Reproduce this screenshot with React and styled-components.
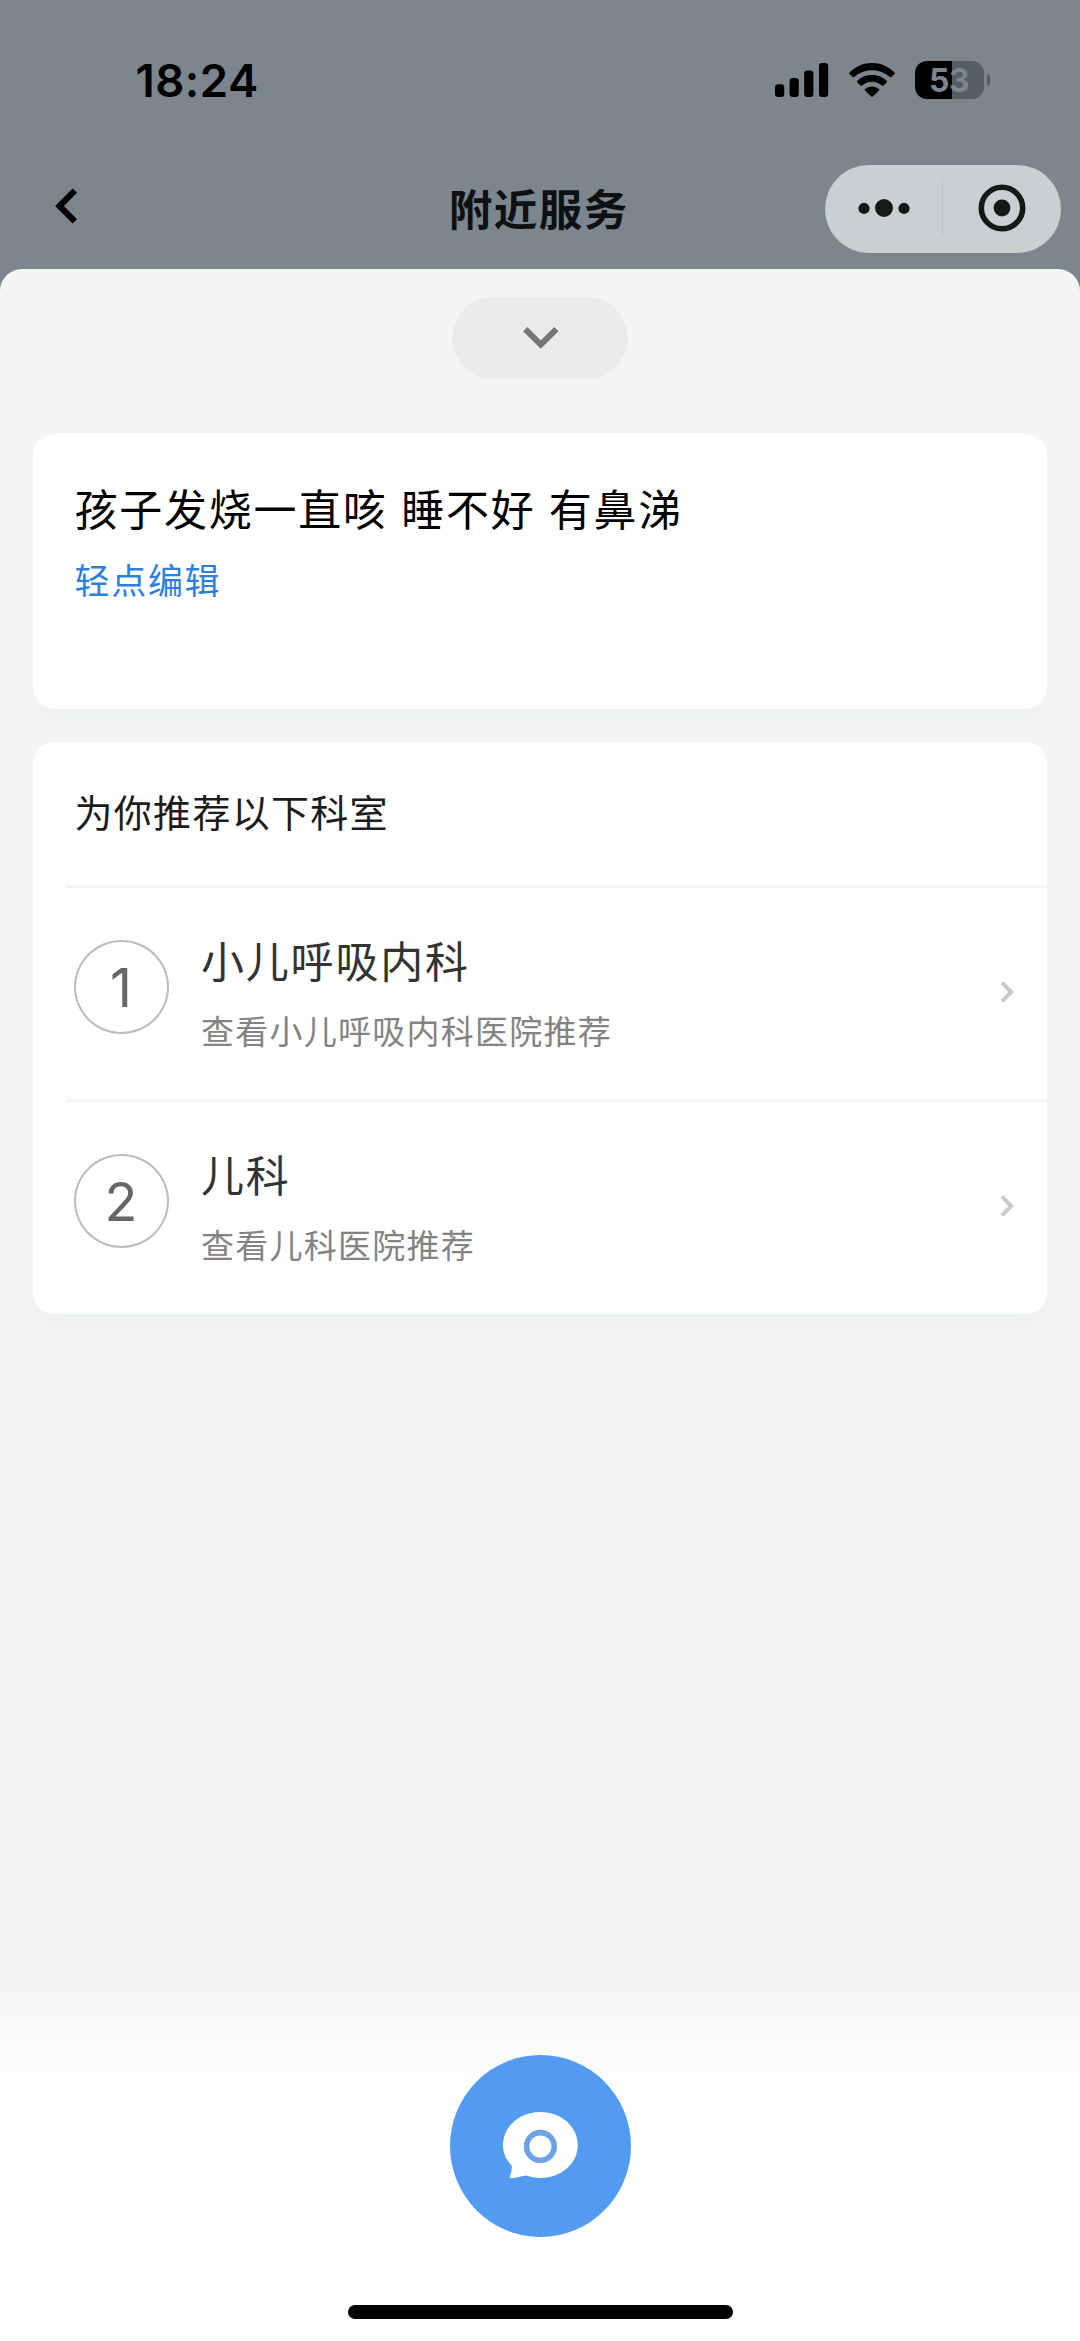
import React from "react";
import styled, { createGlobalStyle } from "styled-components";

const GlobalStyle = createGlobalStyle`
  * { box-sizing: border-box; }
  body {
    margin: 0;
    background: #7c868e;
    font-family: "Noto Sans CJK SC", "Noto Sans", sans-serif;
  }
`;

const Screen = styled.div`
  width: 1080px;
  height: 2341px;
  display: flex;
  flex-direction: column;
  overflow: hidden;
  background: #7c868e;
`;

const StatusBar = styled.header`
  height: 137px;
  padding: 22px 90px 0 135.5px;
  display: flex;
  align-items: flex-start;
  justify-content: space-between;
`;

const Clock = styled.time`
  padding-top: 1px;
  font: 600 45.5px/116px Inter, sans-serif;
  letter-spacing: 0.5px;
  color: #000;
`;

const StatusIcons = styled.div`
  display: flex;
  align-items: center;
  gap: 20px;
  height: 116px;
`;

const Battery = styled.div`
  display: flex;
  align-items: center;
  gap: 3px;
`;

const BatteryBody = styled.div`
  width: 69px;
  height: 38px;
  padding-right: 1px;
  border-radius: 12px;
  display: flex;
  align-items: center;
  justify-content: center;
  background: linear-gradient(90deg, #000 37px, #565d63 37px);
  font: 700 32px/39px Inter, sans-serif;
  letter-spacing: -0.5px;
  color: #7c868e;
`;

const BatteryTip = styled.div`
  width: 3px;
  height: 12px;
  border-radius: 0 3px 3px 0;
  background: #565d63;
`;

const NavBar = styled.nav`
  height: 132px;
  padding: 28px 19.5px 0 55px;
  display: grid;
  grid-template-columns: 236px 1fr 236px;
  align-items: start;
  justify-items: center;
  column-gap: 18px;
`;

const BackButton = styled.button`
  justify-self: start;
  display: flex;
  padding: 23px 0 0;
  border: 0;
  background: none;
`;

const PageTitle = styled.h1`
  margin: 0;
  padding-right: 38px;
  font-size: 43.5px;
  line-height: 85px;
  font-weight: 700;
  letter-spacing: 1.5px;
  white-space: nowrap;
  color: #0e1012;
`;

const Capsule = styled.div`
  width: 236px;
  height: 87.5px;
  border-radius: 44px;
  display: flex;
  align-items: center;
  background: #cacfd2;
`;

const CapsuleHalf = styled.div`
  flex: 1;
  display: flex;
  justify-content: center;
  padding: 0 0 1px 1px;
`;

const CapsuleRule = styled.div`
  width: 1.5px;
  height: 55px;
  background: #bbc0c3;
`;

const Sheet = styled.main`
  flex: 1;
  padding: 28px 33px 22px;
  border-radius: 22px 22px 0 0;
  display: flex;
  flex-direction: column;
  align-items: center;
  background: linear-gradient(180deg, #f4f6f6 0, #f4f6f6 1718px, #ffffff 1832px);
`;

const CollapseButton = styled.button`
  width: 176px;
  height: 82px;
  padding: 0;
  border: 0;
  border-radius: 41px;
  display: flex;
  align-items: center;
  justify-content: center;
  background: #eaeceb;
`;

const Card = styled.section`
  width: 1014px;
  height: ${(p) => p.$height}px;
  margin-top: ${(p) => p.$gap}px;
  border-radius: 22px;
  background: #fff;
  box-shadow: 0 14px 28px -6px rgba(40, 60, 60, 0.03);
`;

const Query = styled.p`
  margin: 0;
  padding: 41px 42px 0 41.5px;
  font-size: 43px;
  line-height: 64px;
  letter-spacing: 1.75px;
  word-spacing: 2px;
  color: #000;
`;

const EditLink = styled.a`
  display: block;
  padding: 14px 42px 0 41.5px;
  font-size: 35px;
  line-height: 52px;
  letter-spacing: 1.7px;
  color: #2c7fdd;
`;

const CardHeading = styled.h2`
  height: 143px;
  margin: 0;
  padding: 0 42px 0 41.5px;
  font-size: 38px;
  line-height: 137px;
  font-weight: 400;
  letter-spacing: 1.3px;
  color: #1c1c1c;
`;

const Department = styled.div`
  height: 214px;
  margin-left: 33px;
  padding: 0 32px 0 8px;
  border-top: 3px solid #f5f5f5;
  display: flex;
  align-items: flex-start;
`;

const Rank = styled.div`
  width: 95px;
  height: 94px;
  margin: 52px 32px 0 0;
  padding-right: 1px;
  border: 2px solid #bbbbc1;
  border-radius: 50%;
  text-align: center;
  font: 400 54px/92px Inter, sans-serif;
  color: #666;
`;

const DepartmentText = styled.div`
  flex: 1;
  padding-top: 39px;
`;

const Name = styled.div`
  font-size: 43px;
  line-height: 64px;
  letter-spacing: 1.8px;
  color: #333;
`;

const Hint = styled.div`
  padding-top: 15px;
  font-size: 33px;
  line-height: 48px;
  letter-spacing: 1.25px;
  color: #838383;
`;

const Arrow = styled.svg`
  margin-top: 93px;
`;

const Footer = styled.footer`
  margin-top: auto;
  display: flex;
  flex-direction: column;
  align-items: center;
  gap: 68px;
`;

const ChatButton = styled.button`
  width: 181px;
  height: 182px;
  padding: 0 0 2px;
  border: 0;
  border-radius: 50%;
  display: flex;
  align-items: center;
  justify-content: center;
  background: #529bf0;
`;

const HomeIndicator = styled.div`
  width: 385px;
  height: 14px;
  border-radius: 7px;
  background: #000;
`;

const departments = [
  { name: "小儿呼吸内科", hint: "查看小儿呼吸内科医院推荐" },
  { name: "儿科", hint: "查看儿科医院推荐" },
];

function SignalIcon() {
  return (
    <svg width="54" height="34" viewBox="0 0 54 34">
      <rect x="0" y="21.3" width="9.2" height="12.7" rx="3" />
      <rect x="14.6" y="15" width="9.2" height="19" rx="3" />
      <rect x="29.2" y="7.5" width="9.2" height="26.5" rx="3" />
      <rect x="44" y="0" width="9.2" height="34" rx="3" />
    </svg>
  );
}

function WifiIcon() {
  return (
    <svg width="46" height="34" viewBox="0 0 46 34">
      <path d="M0.6 9.4 C13 -3.1 33 -3.1 45.4 9.4 Q46.2 10.2 45.4 11 L42.4 14 Q41.6 14.7 40.8 14 C31 4.9 15 4.9 5.2 14 Q4.4 14.7 3.6 14 L0.6 11 Q-.2 10.2 .6 9.4 Z" />
      <path d="M8.3 17.8 C16.4 9.8 29.6 9.8 37.7 17.8 Q38.4 18.6 37.7 19.4 L34.4 22.4 Q33.6 23.2 32.8 22.5 C27.2 17.4 18.8 17.4 13.2 22.5 Q12.4 23.2 11.6 22.4 L8.3 19.4 Q7.6 18.6 8.3 17.8 Z" />
      <path d="M16 26 C20 22.6 26 22.6 30 26 Q30.9 26.7 30 27.6 L23.8 33.5 Q23 34.2 22.2 33.5 L16 27.6 Q15.1 26.7 16 26 Z" />
    </svg>
  );
}

export default function App() {
  return (
    <>
      <GlobalStyle />
      <Screen>
        <StatusBar>
          <Clock>18:24</Clock>
          <StatusIcons>
            <SignalIcon />
            <WifiIcon />
            <Battery>
              <BatteryBody>53</BatteryBody>
              <BatteryTip />
            </Battery>
          </StatusIcons>
        </StatusBar>
        <NavBar>
          <BackButton aria-label="返回">
            <svg width="22" height="36" viewBox="0 0 22 36" fill="none">
              <path d="M19.8 2.6 L4.5 18 L19.8 33.4" stroke="#000" strokeWidth="6.2" />
            </svg>
          </BackButton>
          <PageTitle>附近服务</PageTitle>
          <Capsule>
            <CapsuleHalf>
              <svg width="52" height="18" viewBox="0 0 52 18" fill="#161817">
                <circle cx="6" cy="9.4" r="5.6" />
                <circle cx="26" cy="9" r="9" />
                <circle cx="46" cy="9.4" r="5.6" />
              </svg>
            </CapsuleHalf>
            <CapsuleRule />
            <CapsuleHalf>
              <svg width="48" height="48" viewBox="0 0 48 48">
                <circle cx="24" cy="24" r="20.7" fill="none" stroke="#161817" strokeWidth="5.6" />
                <circle cx="24" cy="24" r="8.4" fill="#161817" />
              </svg>
            </CapsuleHalf>
          </Capsule>
        </NavBar>
        <Sheet>
          <CollapseButton aria-label="收起">
            <svg width="37" height="22" viewBox="0 0 37 22" fill="none">
              <path d="M3.2 2.1 L18.8 17.6 L34.4 2.1" stroke="#757776" strokeWidth="6" />
            </svg>
          </CollapseButton>
          <Card $height={275} $gap={55}>
            <Query>孩子发烧一直咳 睡不好 有鼻涕</Query>
            <EditLink>轻点编辑</EditLink>
          </Card>
          <Card $height={572} $gap={33}>
            <CardHeading>为你推荐以下科室</CardHeading>
            {departments.map((d, i) => (
              <Department key={d.name}>
                <Rank>{i + 1}</Rank>
                <DepartmentText>
                  <Name>{d.name}</Name>
                  <Hint>{d.hint}</Hint>
                </DepartmentText>
                <Arrow width="15" height="22" viewBox="0 0 15 22" fill="none">
                  <path d="M2 1.6 L11.2 11 L2 20.4" stroke="#c9c9c9" strokeWidth="4" />
                </Arrow>
              </Department>
            ))}
          </Card>
          <Footer>
            <ChatButton aria-label="对话">
              <svg width="75" height="67" viewBox="0 0 75 67">
                <path
                  d="M37.4 0 C58.2 0 74.8 14.6 74.8 33 C74.8 51.4 58.2 66 37.4 66 C32.4 66 27.6 65.2 23.2 63.6 C18.6 64 13.4 66.4 8.2 66.2 C6.8 66.2 6.4 65.4 6.9 64.2 C8.5 60.4 9 57 8.7 53.4 C3.2 48.2 0 41 0 33 C0 14.6 16.6 0 37.4 0 Z"
                  fill="#fff"
                />
                <circle cx="37.4" cy="34.4" r="13.8" fill="none" stroke="#6ca3e6" strokeWidth="5.6" />
              </svg>
            </ChatButton>
            <HomeIndicator />
          </Footer>
        </Sheet>
      </Screen>
    </>
  );
}
